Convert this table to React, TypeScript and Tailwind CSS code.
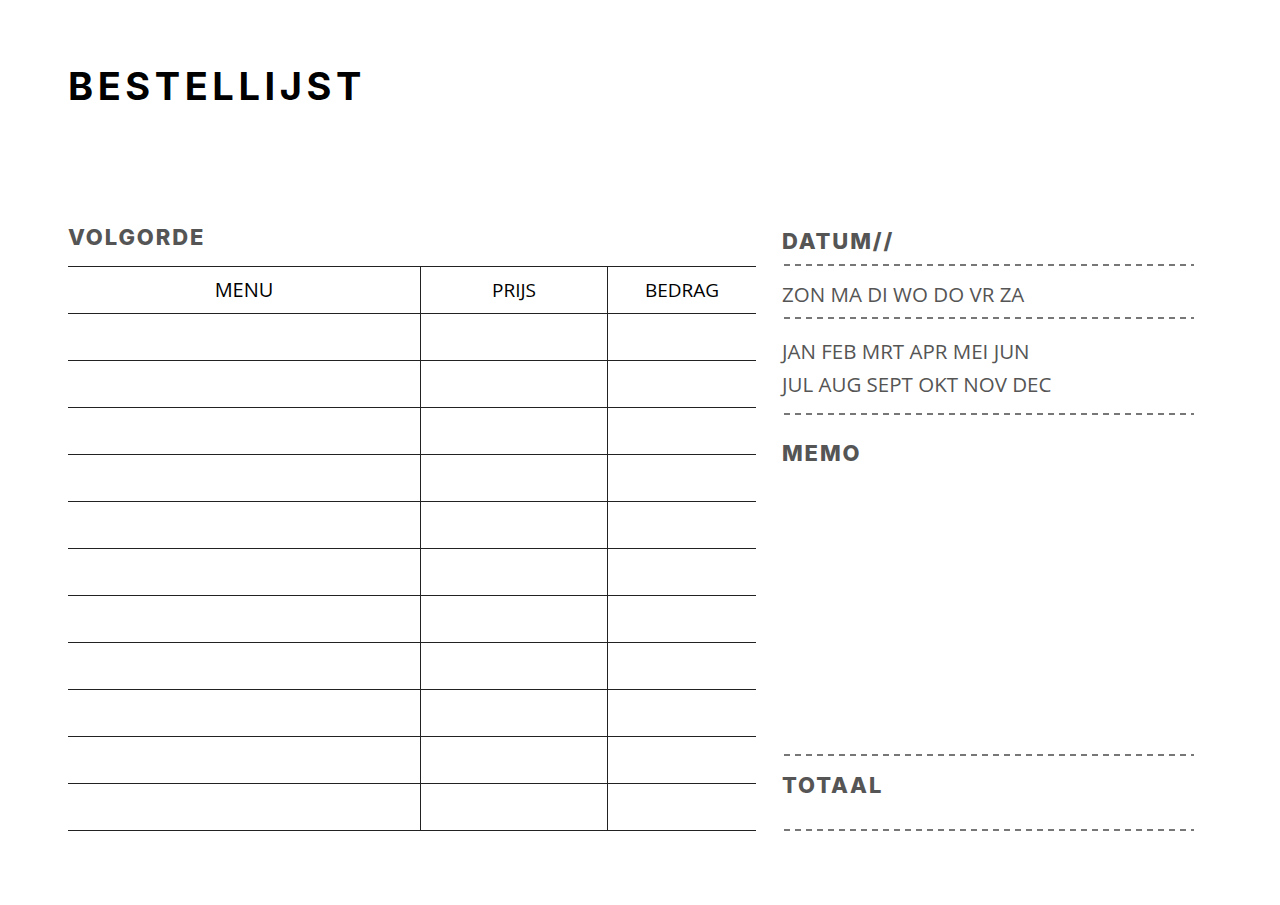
const rows = Array.from({ length: 11 });

function Dash({ className = "" }: { className?: string }) {
  return (
    <div
      className={`h-[2px] w-[410px] ml-[2px] bg-[linear-gradient(to_right,#777_6px,transparent_6px)] bg-[length:11px_2px] bg-repeat-x ${className}`}
    />
  );
}

export default function App() {
  return (
    <div className="h-[905px] w-[1280px] bg-white font-['Open_Sans',sans-serif]">
      <div className="pl-[68px] pt-[62px]">
        <h1 className="font-['Inter',sans-serif] text-[38px] font-bold leading-[48px] tracking-[0.12em] text-black">BESTELLIJST</h1>
      </div>

      <div className="mt-[114px] flex items-start pl-[68px]">
        {/* order table */}
        <div className="w-[688px]">
          <div className="flex h-[26px] items-center font-['Inter',sans-serif] text-[22px] font-extrabold tracking-[0.085em] text-[#555]">VOLGORDE</div>
          <div className="mt-[16px] grid grid-cols-[353px_187px_148px] border-t border-[#222]">
            <div className="flex h-[47px] items-center justify-center border-b border-r border-[#222] text-[20px] font-medium text-black">MENU</div>
            <div className="flex h-[47px] items-center justify-center border-b border-r border-[#222] text-[19px] text-black">PRIJS</div>
            <div className="flex h-[47px] items-center justify-center border-b border-[#222] text-[19px] text-black">BEDRAG</div>
            {rows.map((_, i) => (
              <div key={i} className="contents">
                <div className="h-[47px] border-b border-r border-[#222]" />
                <div className="h-[47px] border-b border-r border-[#222]" />
                <div className="h-[47px] border-b border-[#222]" />
              </div>
            ))}
          </div>
        </div>

        {/* date / memo / total */}
        <div className="ml-[26px] mt-[4px] w-[413px] text-[#555]">
          <div className="flex h-[26px] items-center font-['Inter',sans-serif] text-[22px] font-extrabold tracking-[0.085em]">DATUM//</div>
          <Dash className="mt-[10px]" />
          <div className="mt-[16px] flex h-[24px] items-center text-[20.5px]">ZON MA DI WO DO VR ZA</div>
          <Dash className="mt-[11px]" />
          <div className="mt-[20px] flex h-[24px] items-center text-[20.5px]">JAN FEB MRT APR MEI JUN</div>
          <div className="mt-[9px] flex h-[24px] items-center text-[20.5px]">JUL AUG SEPT OKT NOV DEC</div>
          <Dash className="mt-[17px]" />
          <div className="mt-[25px] flex h-[26px] items-center font-['Inter',sans-serif] text-[22px] font-extrabold tracking-[0.085em]">MEMO</div>
          <Dash className="mt-[288px]" />
          <div className="mt-[16px] flex h-[26px] items-center font-['Inter',sans-serif] text-[22px] font-extrabold tracking-[0.085em]">TOTAAL</div>
          <Dash className="mt-[31px]" />
        </div>
      </div>
    </div>
  );
}
